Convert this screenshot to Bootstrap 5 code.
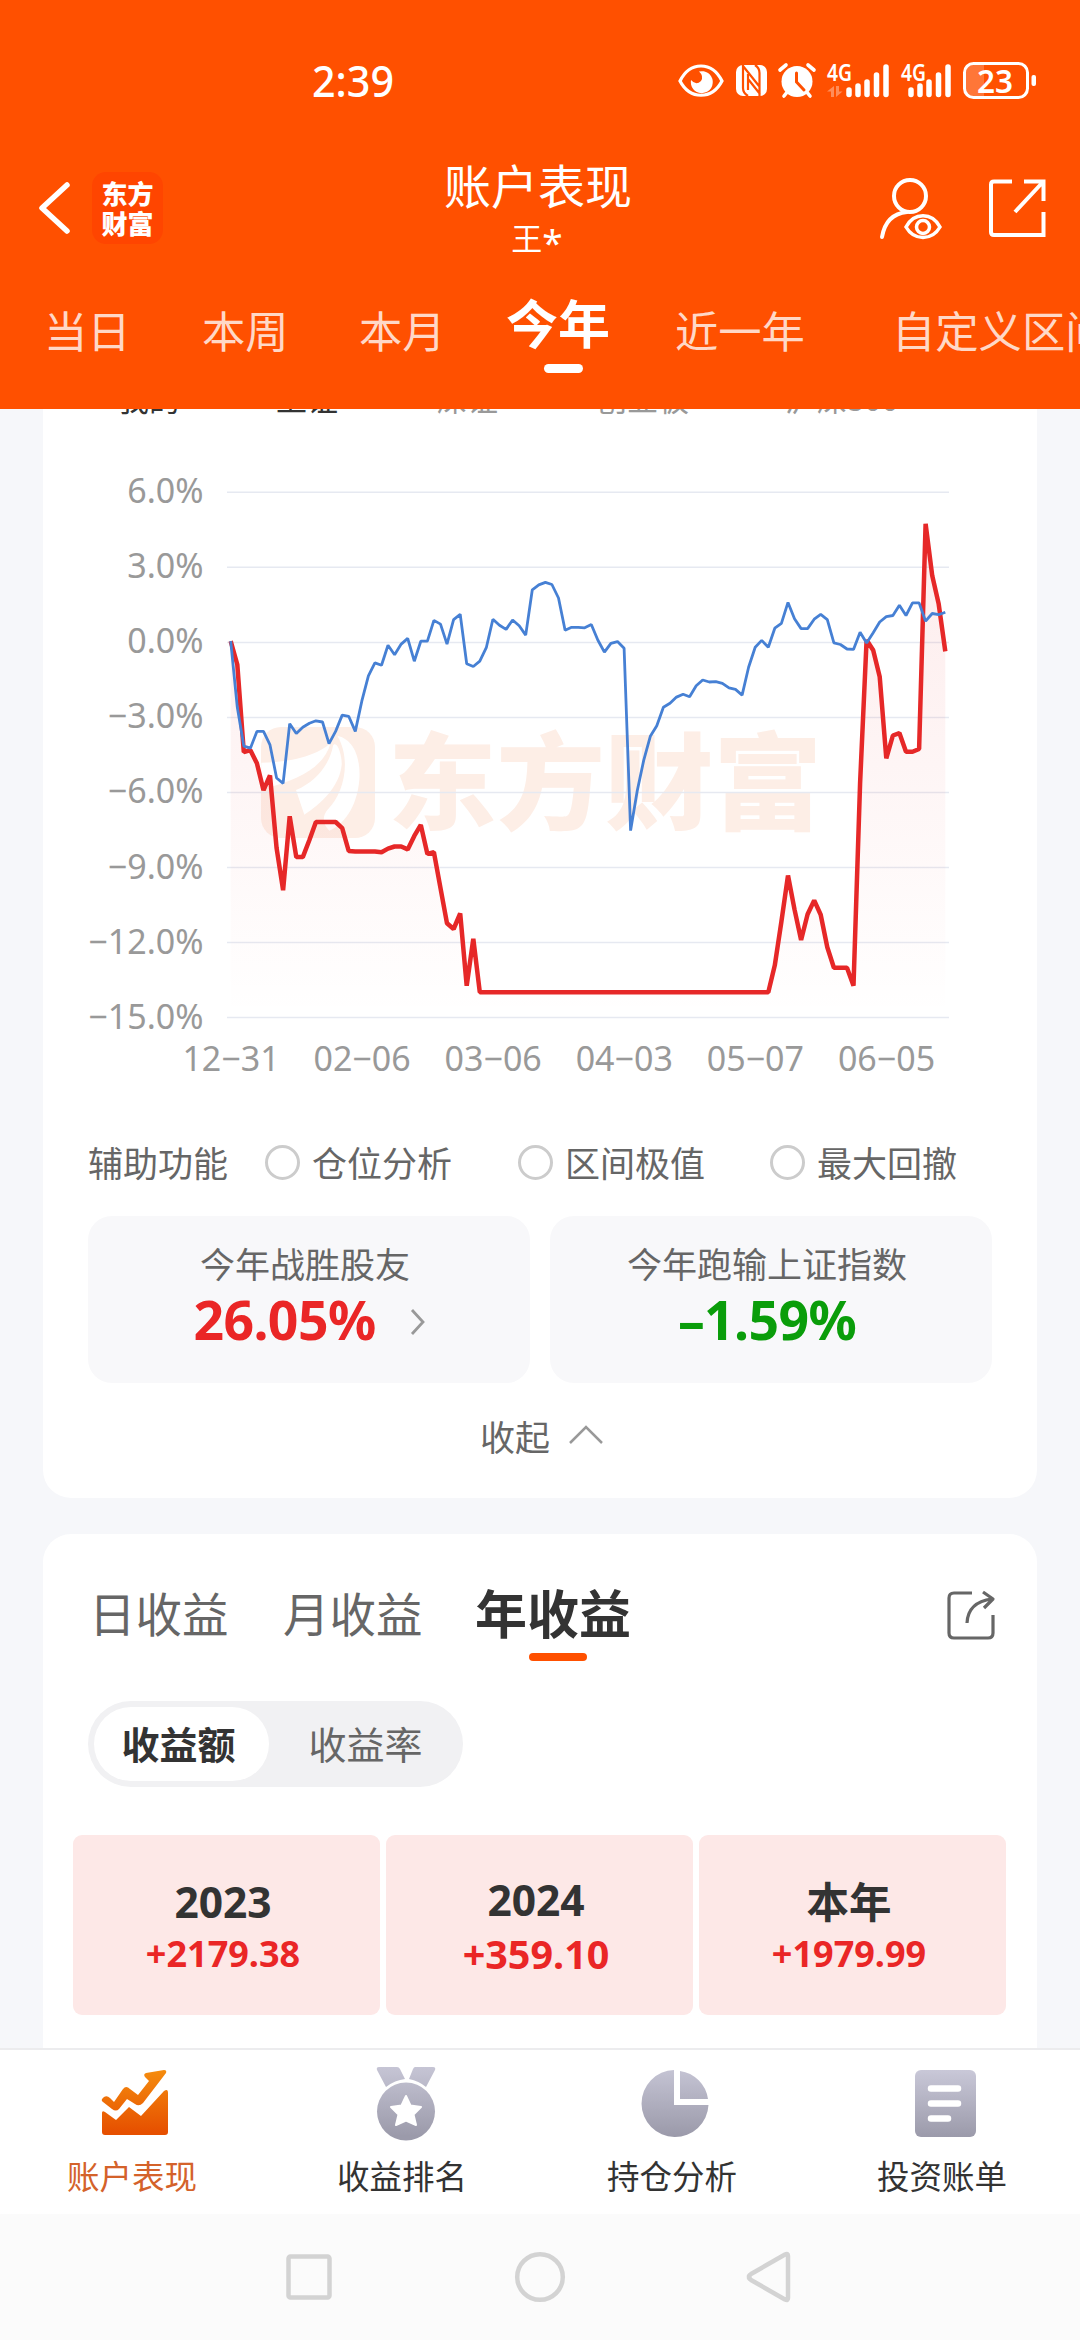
<!DOCTYPE html>
<html lang="zh-CN">
<head>
<meta charset="utf-8">
<meta name="viewport" content="width=device-width, initial-scale=1">
<title>账户表现</title>
<link href="https://cdn.jsdelivr.net/npm/bootstrap@5.3.0/dist/css/bootstrap.min.css" rel="stylesheet">
<style>
body{font-family:"Noto Sans","Noto Sans CJK SC",sans-serif;background:#f6f7fa;color:#333;width:1080px;height:2340px;overflow:hidden;line-height:1}
svg{display:block;flex:none}
svg text{font-family:"Noto Sans","Noto Sans CJK SC",sans-serif}
.cjk{font-family:"Noto Sans CJK SC",sans-serif;white-space:nowrap}
.app-head{background:#ff5000;height:409px;color:#fff;flex:none}
.title-bar{height:119px;margin:-12px 0 13px;padding:0 34px 0 38px}
.logo-tile{width:71px;height:72px;border-radius:14px;background:#ff4500;font-size:26px;font-weight:900;line-height:30px;margin-left:21px}
.title-txt{font-size:47px;line-height:58px;padding:0 8px 4px 0;margin-top:-4px}
.sub-txt{font-size:31px;line-height:40px;padding-right:10px}
.sub-txt span{font-family:"Noto Sans",sans-serif;font-size:37px;line-height:30px;vertical-align:-6px}
.period{height:129px;font-size:43.3px;color:rgba(255,255,255,.78);padding-left:44px;overflow:hidden}
.period>div{height:98px;line-height:98px;flex:none}
.period .on{color:#fff;font-weight:700;font-size:52px;line-height:83px;position:relative}
.period .on::after{content:"";position:absolute;left:38px;top:84px;width:39px;height:9px;border-radius:5px;background:#fff}
.scroll-area{height:1639px;overflow:hidden;padding:0 43px;flex:none}
.panel{background:#fff;border-radius:28px}
.panel-a{height:1089px;border-radius:0 0 28px 28px;overflow:hidden}
.legend-row{height:33px;margin-top:-26px;font-size:31px;line-height:30px;color:#999;padding-left:75px}
.legend-row span{flex:none}
.helper{height:58px;font-size:35px;color:#666;padding:0 0 2px 45px}
.helper span{position:relative;top:-1px}
.ring{width:35px;height:35px;border:3px solid #ccc;border-radius:50%;flex:none}
.stat-box{width:442px;height:167px;border-radius:24px;background:#f8f8fa;padding:26px 8px 0 0}
.stat-lab{font-size:35px;line-height:42px;color:#666}
.stat-val{font-size:53.5px;line-height:60px;font-weight:700;letter-spacing:-.6px;margin-top:6px}
.up{color:#ea2626}.down{color:#0a9d0a}
.fold{font-size:35px;color:#666;height:104px;padding-left:4px}
.inc-tabs{height:103px;padding:53px 41px 0 46px;font-size:46.5px;color:#666}
.inc-tabs .on{color:#333;font-weight:700;font-size:52px;position:relative}
.inc-tabs .on::after{content:"";position:absolute;left:54px;top:91px;width:58px;height:8px;border-radius:4px;background:#ff5000}
.inc-tabs div{line-height:100px;height:100px}
.seg{width:375px;height:86px;border-radius:43px;background:#f1f1f3;padding:6px;margin:64px 0 0 45px;font-size:38px;color:#666}
.seg .sel{width:175px;height:74px;border-radius:37px;background:#fff;color:#333;font-weight:700;padding-right:6px}
.seg div{padding-bottom:2px}
.tile{height:180px;border-radius:9px;background:#fde8e7;flex:1 1 0;padding:44px 7px 0 0}
.tile .yr{font-size:42.5px;line-height:46px;font-weight:700}
.tile .amt{font-size:36px;line-height:40px;font-weight:700;margin-top:9px}
.bottom-nav{height:166px;background:#fff;border-top:2px solid #ececee;flex:none}
.bottom-nav .nav-lab{font-size:32.5px;line-height:40px;padding-right:6px;margin-top:4px}
.sys-nav{height:126px;background:#fbfbfb;flex:none}
</style>
</head>
<body class="d-flex flex-column">
<header class="app-head">
  <svg width="1080" height="160" viewBox="0 0 1080 160" fill="#fff">
    <text x="312" y="97" font-size="44" font-weight="500" textLength="82" lengthAdjust="spacingAndGlyphs">2:39</text>
    <path d="M680 81C690 61 712 61 722 81C712 100 690 100 680 81Z" fill="none" stroke="#fff" stroke-width="3.2"/>
    <path d="M699 71.500A11 11 0 1 1 691 80Q696 86 701 81Q704 76 699 71.500Z"/>
    <rect x="736" y="65" width="31" height="31" rx="7"/>
    <path d="M743 65V88Q743 93 748 96M743 66L759 86M748 74V90M748 79L760 94M759.500 96V73Q759.500 68 755 65" fill="none" stroke="#ff5000" stroke-width="2.2"/>
    <circle cx="797" cy="81.500" r="15.500"/>
    <path d="M780 70L786 65M814 70L808 65M788 91L784 96M806 91L810 96" stroke="#fff" stroke-width="3.600" stroke-linecap="round"/>
    <path d="M796.500 73V82L804 90" stroke="#ff5000" stroke-width="3" fill="none" stroke-linecap="round"/>
    <text x="827" y="81" font-size="23" font-weight="600" textLength="25" lengthAdjust="spacingAndGlyphs">4G</text>
    <text x="901" y="81" font-size="23" font-weight="600" textLength="25" lengthAdjust="spacingAndGlyphs">4G</text>
    <path d="M827 91.500L834 86V97H831V91.500ZM836 86V97L842.500 91.500H839V86Z" fill-opacity=".35"/>
    <g stroke="#fff" stroke-width="5.500" stroke-linecap="round">
      <path d="M849 90V94.500M858 86V94.500M867 82V94.500M876.500 75V94.500M886 67V94.500"/>
      <path d="M911 90V94.500M920 86V94.500M929 82V94.500M938.500 75V94.500M948 67V94.500"/>
    </g>
    <path d="M984 65V97H974Q966 97 966 89V73Q966 65 974 65Z" fill-opacity=".22"/>
    <rect x="964.500" y="63.500" width="63" height="34" rx="9" fill="none" stroke="#fff" stroke-width="3"/>
    <rect x="1031.500" y="75" width="4.500" height="11" rx="2"/>
    <text x="977" y="92.500" font-size="33" font-weight="600" textLength="36" lengthAdjust="spacingAndGlyphs">23</text>
  </svg>
  <div class="title-bar d-flex align-items-center justify-content-between">
    <div class="d-flex align-items-center" style="width:260px">
      <svg width="33" height="56" viewBox="0 0 33 56"><path d="M29 5L4 28L29 51" fill="none" stroke="#fff" stroke-width="5.500" stroke-linecap="round" stroke-linejoin="round"/></svg>
      <div class="logo-tile cjk d-flex flex-column justify-content-center align-items-center"><span>东方</span><span>财富</span></div>
    </div>
    <div class="text-center">
      <div class="title-txt cjk">账户表现</div>
      <div class="sub-txt cjk">王<span>*</span></div>
    </div>
    <div class="d-flex justify-content-end" style="width:260px">
      <svg width="64" height="64" viewBox="0 0 64 64" fill="none" stroke="#fff" stroke-width="4" stroke-linecap="round">
        <circle cx="31" cy="20" r="16"/><path d="M3 61Q7 38 28 36"/>
        <path d="M27 51C35 36 53 36 61 51C53 65 35 65 27 51Z" stroke-width="3.500"/><circle cx="44" cy="51" r="6.500" stroke-width="3.500"/>
      </svg>
      <svg width="58" height="64" viewBox="0 0 58 64" style="margin-left:45px" fill="none" stroke="#fff" stroke-width="4">
        <path d="M24 5.500H6Q3 5.500 3 8.500V56Q3 59 6 59H55.500V36M36 5.500H55.500V25M54 7L27 36"/>
      </svg>
    </div>
  </div>
  <div class="period cjk d-flex">
    <div style="width:158px">当日</div><div style="width:157px">本周</div><div style="width:147px">本月</div>
    <div class="on" style="width:169px">今年</div><div style="width:217px">近一年</div><div>自定义区间</div>
  </div>
</header>

<main class="scroll-area">
  <section class="panel panel-a">
    <div class="legend-row cjk d-flex">
      <span style="width:158px;color:#333">我的</span><span style="width:160px;color:#333">上证</span><span style="width:160px">深证</span><span style="width:189px">创业板</span><span>沪深300</span>
    </div>
    <svg id="perf" width="994" height="718" viewBox="43 416 994 718">
      <defs><linearGradient id="fade" gradientUnits="userSpaceOnUse" x1="0" y1="525" x2="0" y2="1017"><stop offset="0" stop-color="#ea2626" stop-opacity=".09"/><stop offset="1" stop-color="#ea2626" stop-opacity="0"/></linearGradient></defs>
      <g fill="#fdeee6">
        <rect x="261" y="727" width="114" height="111" rx="20"/>
        <g fill="#fff" transform="translate(240 700) scale(.33333)">
          <path d="M64 188C170 186 240 160 272 128C255 195 185 240 64 268Z"/>
          <path d="M168 270C230 245 270 190 279 137C290 118 307 165 305 195C298 260 245 310 193 344Z"/>
          <path d="M292 107C350 120 362 190 358 240C350 325 310 375 268 392C245 370 248 345 264 328C312 280 335 180 292 107Z"/>
        </g>
        <text x="388" y="821" font-size="105" font-weight="900" textLength="434" lengthAdjust="spacingAndGlyphs" style="font-family:'Noto Sans CJK SC',sans-serif">东方财富</text>
      </g>
      <g id="grid" stroke="#e6e9f1" stroke-width="1.500"></g>
      <path id="mineFill" fill="url(#fade)"/>
      <path id="mine" fill="none" stroke="#e62828" stroke-width="4.500" stroke-linejoin="bevel"/>
      <path id="index" fill="none" stroke="#4680d4" stroke-width="2.800" stroke-linejoin="bevel"/>
      <g id="labels" fill="#999" font-size="34"></g>
    </svg>
    <div class="helper cjk d-flex align-items-center">
      <span style="width:177px">辅助功能</span>
      <i class="ring"></i><span style="width:206px;margin-left:12px">仓位分析</span>
      <i class="ring"></i><span style="width:205px;margin-left:12px">区间极值</span>
      <i class="ring"></i><span style="margin-left:12px">最大回撤</span>
    </div>
    <div class="d-flex justify-content-between" style="padding:24px 45px 0">
      <div class="stat-box text-center">
        <div class="stat-lab cjk">今年战胜股友</div>
        <div class="stat-val up d-flex justify-content-center align-items-center" style="padding-left:10px">26.05%
          <svg width="18" height="28" viewBox="0 0 18 28" style="margin:4px 0 0 33px"><path d="M3 2L14 14L3 26" fill="none" stroke="#999" stroke-width="2.800"/></svg>
        </div>
      </div>
      <div class="stat-box text-center">
        <div class="stat-lab cjk">今年跑输上证指数</div>
        <div class="stat-val down">–1.59%</div>
      </div>
    </div>
    <div class="fold cjk d-flex justify-content-center align-items-center"><span>收起</span>
      <svg width="36" height="22" viewBox="0 0 36 22" style="margin-left:18px"><path d="M2 19L18 3L34 19" fill="none" stroke="#999" stroke-width="2.500"/></svg>
    </div>
  </section>

  <section class="panel" style="height:560px;margin-top:36px">
    <div class="inc-tabs cjk d-flex align-items-center">
      <div style="width:194px">日收益</div><div style="width:192px">月收益</div><div class="on">年收益</div>
      <svg class="ms-auto" width="50" height="50" viewBox="0 0 50 50" style="margin-top:6px" fill="none" stroke="#666" stroke-width="3.200" stroke-linejoin="round">
        <path d="M26 3H8Q3 3 3 8V43Q3 48 8 48H42Q47 48 47 43V25M21 33Q22 12 46 9M37 2L47 9L38 18"/>
      </svg>
    </div>
    <div class="seg cjk d-flex">
      <div class="sel d-flex align-items-center justify-content-center">收益额</div>
      <div class="flex-fill d-flex align-items-center justify-content-center" style="padding-left:5px">收益率</div>
    </div>
    <div class="d-flex text-center" style="gap:6px;padding:48px 31px 0 30px">
      <div class="tile"><div class="yr">2023</div><div class="amt up">+2179.38</div></div>
      <div class="tile"><div class="yr" style="margin-top:-2px">2024</div><div class="amt up" style="font-size:39.5px;margin-top:11px">+359.10</div></div>
      <div class="tile"><div class="yr cjk" style="position:relative;top:-2px">本年</div><div class="amt up">+1979.99</div></div>
    </div>
  </section>
</main>

<nav class="bottom-nav d-flex text-center">
  <svg width="0" height="0"><defs>
    <linearGradient id="gy" x1="0" y1="0" x2="0" y2="1"><stop offset="0" stop-color="#c9c8d8"/><stop offset="1" stop-color="#9b9aaa"/></linearGradient>
    <linearGradient id="og" gradientUnits="userSpaceOnUse" x1="0" y1="10" x2="0" y2="76"><stop offset="0" stop-color="#f6900f"/><stop offset="1" stop-color="#e65000"/></linearGradient>
    <linearGradient id="gm" gradientUnits="userSpaceOnUse" x1="0" y1="6" x2="0" y2="80"><stop offset="0" stop-color="#c9c8d8"/><stop offset="1" stop-color="#9b9aaa"/></linearGradient>
  </defs></svg>
  <div style="width:270px"><svg class="mx-auto" width="80" height="95" viewBox="0 0 80 95" style="margin-top:6px" fill="url(#og)">
    <path d="M7 57Q7 54 10 56L21 64L34 51L46 60L69 35Q73 32 73 37V76Q73 79 70 79H10Q7 79 7 76Z"/>
    <path d="M9 41Q12 39 15 42L19 46L28 33Q31 29 35 33L43 39L54 25L50 21Q48 18 51 17L69 14Q72 14 71 17L48 47Q44 51 40 48L32 43L24 53Q21 56 17 53L8 46Q5 44 9 41Z"/>
  </svg><div class="nav-lab cjk" style="color:#d4622a">账户表现</div></div>
  <div style="width:270px"><svg class="mx-auto" width="80" height="95" viewBox="0 0 80 95" style="margin-top:6px" fill="url(#gm)">
    <path d="M14 11H32Q34 11 35 13L40 23Q30 24 21 31L12 14Q11 11 14 11ZM50 11H68Q71 11 70 14L61 31Q54 25 44 23L48 13Q49 11 50 11Z"/>
    <circle cx="41" cy="55.500" r="29"/>
    <path d="M41 40L45.500 49.500L56 51L48.500 58.500L51 69L41 64.500L31 69L33.500 58.500L26 51L36.500 49.500Z" fill="#fff" stroke="#fff" stroke-width="2" stroke-linejoin="round"/>
  </svg><div class="nav-lab cjk">收益排名</div></div>
  <div style="width:270px"><svg class="mx-auto" width="80" height="95" viewBox="0 0 80 95" style="margin-top:6px" fill="url(#gm)">
    <path d="M39 14V49H73.500A33.500 33.500 0 1 1 39 14ZM45 15A33 33 0 0 1 73 43H45Z"/>
  </svg><div class="nav-lab cjk">持仓分析</div></div>
  <div style="width:270px"><svg class="mx-auto" width="80" height="95" viewBox="0 0 80 95" style="margin-top:6px">
    <rect x="10" y="14" width="61" height="67" rx="6" fill="url(#gy)"/>
    <path d="M26 32.500H53M26 47.500H53M26 62.500H43" stroke="#fff" stroke-width="6.500" stroke-linecap="round"/>
  </svg><div class="nav-lab cjk">投资账单</div></div>
</nav>
<div class="sys-nav d-flex justify-content-center align-items-center">
  <svg width="520" height="60" viewBox="280 2247 520 60" fill="none" stroke="#d3d3d3" stroke-width="4.500" stroke-linejoin="round">
    <rect x="288.500" y="2256.500" width="41" height="41" rx="2"/><circle cx="540" cy="2277" r="22.800"/><path d="M749.500 2277Q748 2276 751 2274L785 2254.500Q788 2253 788 2256V2298Q788 2301 785 2299.500L751 2280Q748 2278 749.500 2277Z"/>
  </svg>
</div>

<script src="https://cdn.jsdelivr.net/npm/bootstrap@5.3.0/dist/js/bootstrap.bundle.min.js"></script>
<script>
// Series are stored as depth below the plot's origin, 61.25 units to one percent.
const mine=[493,550,765,760,792,858,822,1000,1103,922,1022,1022,980,936,936,936,936,951,1007,1008,1008,1008,1008,1010,1001,996,996,1003,970,943,1014,1010,1098,1184,1198,1160,1337,1222,
  ...Array(45).fill(1353),1287,1180,1067,1150,1225,1162,1128,1163,1243,1293,1293,1293,1337,840,490,515,580,780,724,718,764,764,757,205,332,402,518];
const index=[493,655,750,755,714,714,747,828,841,695,719,704,694,688,691,744,714,674,677,714,640,578,546,552,503,526,500,486,542,493,493,442,451,500,440,427,548,555,542,508,439,454,464,441,455,478,367,355,349,354,387,466,459,459,460,452,490,520,498,494,510,957,860,785,726,700,655,645,630,623,629,602,588,593,592,596,607,611,625,557,508,491,508,461,449,398,438,462,462,439,427,440,497,501,512,513,471,497,472,446,433,430,405,430,399,399,444,425,428,422];
const px=i=>(230.7+i*6.556).toFixed(1), py=v=>(440+v/2.45).toFixed(1);
const path=a=>'M'+a.map((v,i)=>px(i)+' '+py(v)).join('L');
document.getElementById('mine').setAttribute('d',path(mine));
document.getElementById('mineFill').setAttribute('d',path(mine)+'V1017H230.7Z');
document.getElementById('index').setAttribute('d',path(index));
let lines='',txt='';
['6.0%','3.0%','0.0%','−3.0%','−6.0%','−9.0%','−12.0%','−15.0%'].forEach((t,i)=>{
  const y=492.3+i*75.04;
  lines+=`<path d="M227 ${y}H949"/>`;
  txt+=`<text x="203.500" y="${y+11}" text-anchor="end">${t}</text>`;
});
['12−31','02−06','03−06','04−03','05−07','06−05'].forEach((t,i)=>{
  txt+=`<text x="${231+i*131.1}" y="1070.5" text-anchor="middle">${t}</text>`;
});
document.getElementById('grid').innerHTML=lines;
document.getElementById('labels').innerHTML=txt;
</script>
</body>
</html>
